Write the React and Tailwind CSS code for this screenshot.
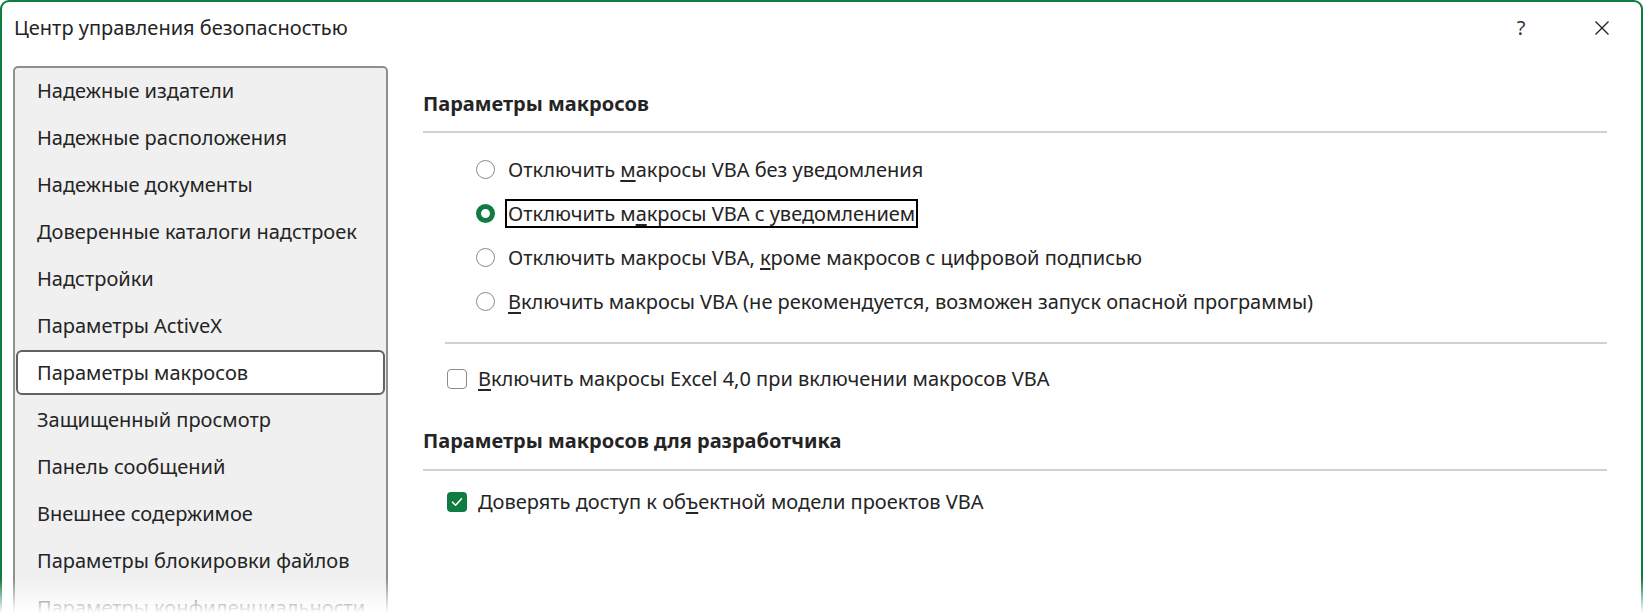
export default function App() {
  const items = [
    "Надежные издатели",
    "Надежные расположения",
    "Надежные документы",
    "Доверенные каталоги надстроек",
    "Надстройки",
    "Параметры ActiveX",
    "Параметры макросов",
    "Защищенный просмотр",
    "Панель сообщений",
    "Внешнее содержимое",
    "Параметры блокировки файлов",
    "Параметры конфиденциальности",
  ];

  const Radio = ({ checked }) =>
    checked ? (
      <span className="w-[19px] h-[19px] rounded-full border-[5px] border-[#107c41] bg-white shrink-0" />
    ) : (
      <span className="w-[19px] h-[19px] rounded-full border-[1.5px] border-[#8a8a8a] bg-white shrink-0" />
    );

  const u = (t) => <span className="underline underline-offset-[3px] decoration-[1.5px]">{t}</span>;

  const radios = [
    { checked: false, focus: false, label: <>Отключить {u("м")}акросы VBA без уведомления</> },
    { checked: true, focus: true, label: <>Отключить м{u("а")}кросы VBA с уведомлением</> },
    { checked: false, focus: false, label: <>Отключить макросы VBA, {u("к")}роме макросов с цифровой подписью</> },
    { checked: false, focus: false, label: <>{u("В")}ключить макросы VBA (не рекомендуется, возможен запуск опасной программы)</> },
  ];

  return (
    <div className="relative w-[1643px] h-[613px] overflow-hidden bg-white font-['Noto_Sans',sans-serif] text-[#242424]">
      <div className="h-[690px] border-2 border-[#107c41] rounded-t-[9px] flex flex-col">
        {/* title bar */}
        <div className="h-[52px] shrink-0 flex items-center pl-[12px]">
          <span className="text-[20px]">Центр управления безопасностью</span>
          <div className="ml-auto mr-[19px] flex items-center gap-[41px]">
            <span className="w-[40px] text-center text-[20px] text-[#333]">?</span>
            <span className="w-[40px] flex justify-center">
              <svg width="16" height="16" viewBox="0 0 16 16">
                <path d="M1.5 1.5 L14.5 14.5 M14.5 1.5 L1.5 14.5" stroke="#242424" strokeWidth="1.4" fill="none" />
              </svg>
            </span>
          </div>
        </div>

        {/* body */}
        <div className="flex flex-1 pt-[12px]">
          {/* left nav */}
          <div className="ml-[11px] w-[375px] shrink-0 border-2 border-[#8f8f8f] rounded-[5px] bg-[#f0f0f0] overflow-hidden">
            <div className="flex flex-col gap-[2px] px-[1px]">
              {items.map((t, i) => (
                <div
                  key={t}
                  className={
                    i === 6
                      ? "h-[45px] flex items-center pl-[19px] text-[20px] whitespace-nowrap rounded-[6px] border-2 border-[#616161] bg-white"
                      : "h-[45px] flex items-center pl-[19px] text-[20px] whitespace-nowrap rounded-[6px] border-2 border-transparent"
                  }
                >
                  {t}
                </div>
              ))}
            </div>
          </div>

          {/* right content */}
          <div className="ml-[35px] mr-[34px] flex-1 flex flex-col">
            <div className="mt-[18px] h-[40px] flex items-center text-[20px] font-bold">Параметры макросов</div>
            <div className="mt-[7px] h-[2px] bg-[#d1d1d1]" />
            <div className="mt-[14px] pl-[53px] flex flex-col">
              {radios.map((r, i) => (
                <div key={i} className="h-[44px] flex items-center gap-[10px]">
                  <Radio checked={r.checked} />
                  <span
                    className={
                      r.focus
                        ? "text-[20px] leading-[25px] border-2 border-black px-[1px]"
                        : "text-[20px] leading-[25px] border-2 border-transparent px-[1px]"
                    }
                  >
                    {r.label}
                  </span>
                </div>
              ))}
            </div>
            <div className="mt-[19px] ml-[22px] h-[2px] bg-[#d1d1d1]" />
            <div className="mt-[15px] h-[40px] pl-[24px] flex items-center gap-[10px]">
              <span className="w-[20px] h-[20px] rounded-[4px] border-[1.5px] border-[#8a8a8a] bg-white shrink-0" />
              <span className="text-[20px] px-[1px]">{u("В")}ключить макросы Excel 4,0 при включении макросов VBA</span>
            </div>
            <div className="mt-[22px] h-[40px] flex items-center text-[20px] font-bold">
              Параметры макросов для разработчика
            </div>
            <div className="mt-[8px] h-[2px] bg-[#d1d1d1]" />
            <div className="mt-[11px] h-[40px] pl-[24px] flex items-center gap-[10px]">
              <span className="w-[20px] h-[20px] rounded-[4px] bg-[#107c41] shrink-0 flex items-center justify-center">
                <svg width="14" height="14" viewBox="0 0 14 14">
                  <path d="M2.5 7.2 L5.6 10.2 L11.5 3.8" stroke="white" strokeWidth="1.6" fill="none" strokeLinecap="round" strokeLinejoin="round" />
                </svg>
              </span>
              <span className="text-[20px] px-[1px]">Доверять доступ к об{u("ъ")}ектной модели проектов VBA</span>
            </div>
          </div>
        </div>
      </div>
      <div className="absolute left-0 right-0 bottom-0 h-[34px] bg-linear-to-b from-white/0 to-white" />
    </div>
  );
}
